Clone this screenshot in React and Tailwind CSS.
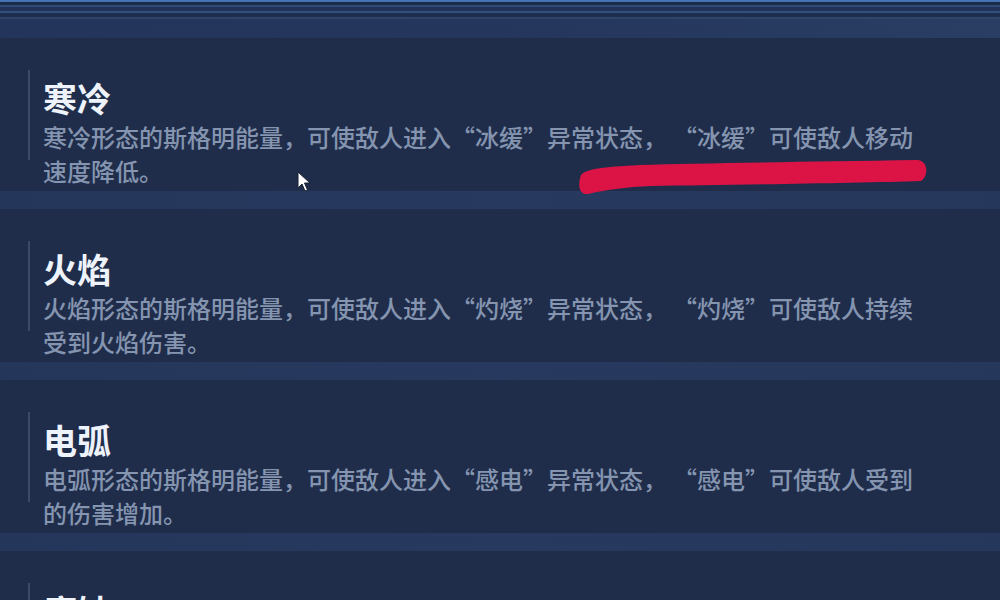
import React from "react";

const items = [
  {
    title: "寒冷",
    lines: [
      "寒冷形态的斯格明能量，可使敌人进入“冰缓”异常状态，\u2005“冰缓”可使敌人移动",
      "速度降低。",
    ],
  },
  {
    title: "火焰",
    lines: [
      "火焰形态的斯格明能量，可使敌人进入“灼烧”异常状态，\u2005“灼烧”可使敌人持续",
      "受到火焰伤害。",
    ],
  },
  {
    title: "电弧",
    lines: [
      "电弧形态的斯格明能量，可使敌人进入“感电”异常状态，\u2005“感电”可使敌人受到",
      "的伤害增加。",
    ],
  },
  {
    title: "腐蚀",
    lines: ["腐蚀形态的斯格明能量，可使敌人进入“腐蚀”异常状态。"],
  },
];

const Header = () => (
  <div className="flex flex-col">
    <div className="h-[2px] bg-[#4673b5]" />
    <div className="h-[3px] bg-[#1c2b48]" />
    <div className="h-[2px] bg-[#2f4a76]" />
    <div className="h-[4px] bg-[#213358]" />
    <div className="h-[2px] bg-[#34507f]" />
    <div className="h-[4px] bg-[#1e2e4f]" />
    <div className="h-[2px] bg-[#2f4469]" />
    <div className="h-[19px] bg-gradient-to-r from-[#23355a] via-[#24365b] to-[#2a3d62]" />
  </div>
);

const Band = () => (
  <div className="h-[18px] bg-gradient-to-r from-[#24365a] via-[#27395e] to-[#25375b]" />
);

const Entry = ({ title, lines }) => (
  <div className="h-[153px] pt-[32px] pl-[28px] flex items-start">
    <div className="w-[2px] h-[90px] bg-[#3a4a68] shrink-0" />
    <div className="ml-[13px] w-[900px] mt-[6px]">
      <div className="text-[34px] leading-[44px] font-bold text-[#eef3fb]">
        {title}
      </div>
      {lines.map((l, i) => (
        <div
          key={i}
          className="text-[24px] leading-[34px] font-medium text-[#8595b0] whitespace-nowrap"
        >
          {l}
        </div>
      ))}
    </div>
  </div>
);

export default function App() {
  return (
    <div
      lang="zh-CN"
      className="relative w-[1000px] h-[600px] overflow-hidden bg-[#1f2d4b]"
      style={{ fontFamily: '"Noto Sans CJK SC", "Noto Sans", sans-serif' }}
    >
      <Header />
      {items.map((it, i) => (
        <div key={i}>
          {i > 0 && <Band />}
          <Entry {...it} />
        </div>
      ))}

      {/* red marker stroke */}
      <svg
        className="absolute left-0 top-0 pointer-events-none"
        width="1000"
        height="600"
        viewBox="0 0 1000 600"
      >
        <path
          d="M581,175 C586,169 602,167 640,165 C700,163 800,162 918,160 C928,161 929,176 921,181 C860,183 720,185 652,186 C625,187 605,190 588,194 C580,195 577,187 581,175 Z"
          fill="#dc1446"
        />
      </svg>

      {/* mouse cursor */}
      <svg
        className="absolute left-[297px] top-[171px] pointer-events-none"
        width="14"
        height="22"
        viewBox="0 0 14 22"
      >
        <path
          d="M1,1 L1,17 L5,13 L8,20 L10.5,19 L7.5,12 L13,12 Z"
          fill="#ffffff"
          stroke="#1a2030"
          strokeWidth="1"
          strokeLinejoin="round"
        />
      </svg>
    </div>
  );
}
